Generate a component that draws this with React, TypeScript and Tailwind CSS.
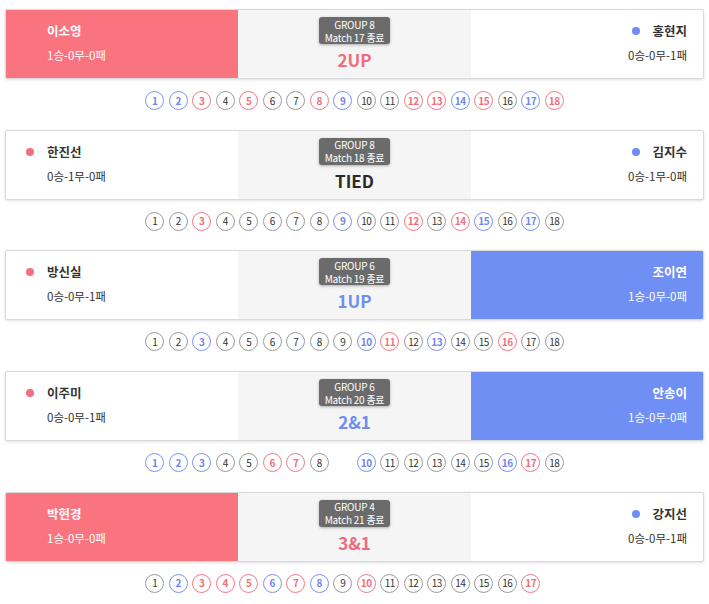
import React from "react";

type Side = { name: string; rec: string };
type Match = {
  left: Side;
  right: Side;
  winner: "left" | "right" | null;
  group: number;
  no: number;
  result: string;
  holes: string;
};

const matches: Match[] = [
  {
    left: { name: "이소영", rec: "1승-0무-0패" },
    right: { name: "홍현지", rec: "0승-0무-1패" },
    winner: "left",
    group: 8,
    no: 17,
    result: "2UP",
    holes: "bbrgrggrbggrrbrgbr",
  },
  {
    left: { name: "한진선", rec: "0승-1무-0패" },
    right: { name: "김지수", rec: "0승-1무-0패" },
    winner: null,
    group: 8,
    no: 18,
    result: "TIED",
    holes: "ggrgggggbggrgrbgbg",
  },
  {
    left: { name: "방신실", rec: "0승-0무-1패" },
    right: { name: "조이연", rec: "1승-0무-0패" },
    winner: "right",
    group: 6,
    no: 19,
    result: "1UP",
    holes: "ggbggggggbrgbggrgg",
  },
  {
    left: { name: "이주미", rec: "0승-0무-1패" },
    right: { name: "안송이", rec: "1승-0무-0패" },
    winner: "right",
    group: 6,
    no: 20,
    result: "2&1",
    holes: "bbbggrrg-bgggggbrg",
  },
  {
    left: { name: "박현경", rec: "1승-0무-0패" },
    right: { name: "강지선", rec: "0승-0무-1패" },
    winner: "left",
    group: 4,
    no: 21,
    result: "3&1",
    holes: "gbrrrbrbgrggggggr-",
  },
];

const font = { fontFamily: '"Noto Sans CJK KR", "Noto Sans", sans-serif' };

const LeftPlayer = ({ p, win }: { p: Side; win: boolean }) => (
  <div
    className={`flex flex-col pl-[20px] pt-[11px] ${
      win ? "bg-[#fa7480] text-white" : "text-[#333]"
    }`}
  >
    <div className="flex items-center gap-[13px]">
      <span className="w-2 h-2 flex">
        {!win && <span className="w-2 h-2 rounded-full bg-[#f4707e]" />}
      </span>
      <span className="text-[12.5px] leading-[20px] font-bold">{p.name}</span>
    </div>
    <div className="pl-[21px] mt-[4px] text-[11.5px] leading-[20px]">{p.rec}</div>
  </div>
);

const RightPlayer = ({ p, win }: { p: Side; win: boolean }) => (
  <div
    className={`flex flex-col items-end pr-[16px] pt-[11px] ${
      win ? "bg-[#708ff5] text-white" : "text-[#333]"
    }`}
  >
    <div className="flex items-center gap-[12px]">
      {!win && <span className="w-2 h-2 rounded-full bg-[#6f8ef4]" />}
      <span className="text-[12.5px] leading-[20px] font-bold">{p.name}</span>
    </div>
    <div className="mt-[4px] text-[11.5px] leading-[20px]">{p.rec}</div>
  </div>
);

const ringColor: Record<string, string> = {
  b: "border-[#7d92ee] text-[#6f86ea] font-semibold",
  r: "border-[#f07a86] text-[#ef6f7d] font-semibold",
  g: "border-[#9a9a9a] text-[#333]",
};

const Holes = ({ holes }: { holes: string }) => (
  <div className="flex justify-center gap-[4.5px] mt-[12px]">
    {holes.split("").map((c, i) =>
      c === "-" ? (
        <span key={i} className="w-[19px] h-[19px]" />
      ) : (
        <span
          key={i}
          className={`w-[19px] h-[19px] rounded-full border flex items-center justify-center text-[10px] leading-none tracking-tighter ${ringColor[c]}`}
        >
          {i + 1}
        </span>
      )
    )}
  </div>
);

const Card = ({ m }: { m: Match }) => {
  const resColor =
    m.result === "TIED"
      ? "text-[#2b2b2b]"
      : m.winner === "left"
      ? "text-[#f06c7b]"
      : "text-[#6f8ef4]";
  return (
    <div className="mb-[19.7px]">
      <div className="h-[70px] mx-[5px] border border-[#d9d9d9] rounded-[2px] shadow-[0_1px_3px_rgba(0,0,0,0.12)] bg-white grid grid-cols-3 overflow-hidden">
        <LeftPlayer p={m.left} win={m.winner === "left"} />
        <div className="bg-[#f5f5f5] flex flex-col items-center pt-[7px]">
          <div className="bg-[#6b6b6b] text-white rounded-[3px] shadow-[0_1px_3px_rgba(0,0,0,0.3)] px-[6px] py-[0.5px] text-[10px] leading-[13px] text-center tracking-tight">
            <div>GROUP {m.group}</div>
            <div>Match {m.no} 종료</div>
          </div>
          <div className={`mt-[6px] text-[17px] leading-[20px] font-bold ${resColor}`}>{m.result}</div>
        </div>
        <RightPlayer p={m.right} win={m.winner === "right"} />
      </div>
      <Holes holes={m.holes} />
    </div>
  );
};

export default function App() {
  return (
    <div className="w-[709px] h-[604px] bg-white pt-[9px] overflow-hidden" style={font}>
      {matches.map((m) => (
        <Card key={m.no} m={m} />
      ))}
    </div>
  );
}
